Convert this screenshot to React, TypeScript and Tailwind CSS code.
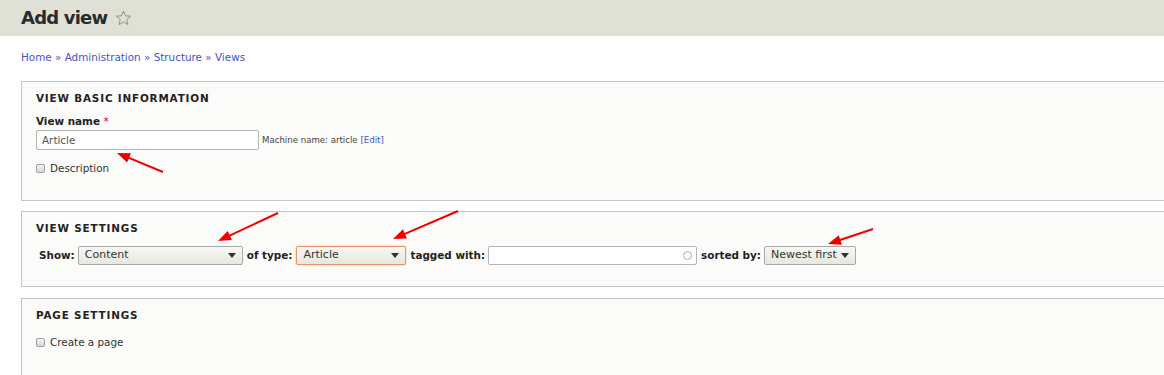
import React from 'react';

const Checkbox: React.FC = () => (
  <span className="inline-block w-[9px] h-[9px] rounded-[2px] border border-[#a0a0a0] bg-gradient-to-b from-[#f4f4f4] to-[#d8d8d8] shrink-0" />
);

const Caret: React.FC = () => (
  <svg width="8" height="5" viewBox="0 0 8 5" className="shrink-0">
    <path d="M0 0 H8 L4 5 Z" fill="#333" />
  </svg>
);

const Select: React.FC<{ value: string; width: string; active?: boolean }> = ({ value, width, active }) => (
  <div
    className={`${width} h-[19px] flex items-center justify-between pl-[6px] pr-[6px] rounded-[2px] text-[11px] font-normal whitespace-nowrap text-[#333] bg-gradient-to-b from-[#f7f8f3] to-[#e6e8df] border ${
      active ? 'border-[#e8946a] shadow-[0_0_2px_#f0b896]' : 'border-[#a8a8a8]'
    }`}
  >
    <span>{value}</span>
    <Caret />
  </div>
);

const Legend: React.FC<{ children: React.ReactNode }> = ({ children }) => (
  <div className="text-[10.4px] leading-[12px] font-bold uppercase tracking-[0.08em] text-[#222]">{children}</div>
);

const Arrow: React.FC<{ x1: number; y1: number; x2: number; y2: number }> = ({ x1, y1, x2, y2 }) => {
  const dx = x2 - x1;
  const dy = y2 - y1;
  const len = Math.hypot(dx, dy);
  const ux = dx / len;
  const uy = dy / len;
  const hl = 13;
  const hw = 5;
  const bx = x2 - ux * hl;
  const by = y2 - uy * hl;
  const head = `${x2},${y2} ${bx - uy * hw},${by + ux * hw} ${bx + uy * hw},${by - ux * hw}`;
  return (
    <g>
      <line x1={x1} y1={y1} x2={bx + ux * 2} y2={by + uy * 2} stroke="#f20000" strokeWidth={2} />
      <polygon points={head} fill="#f20000" />
    </g>
  );
};

const App: React.FC = () => {
  return (
    <div className="relative w-[1164px] h-[375px] overflow-hidden bg-white text-[#333] font-['DejaVu_Sans',sans-serif]">
      {/* Title bar */}
      <header className="h-[36px] bg-[#dfe0d6] flex items-center pl-[21px]">
        <h1 className="text-[18px] font-bold tracking-[-0.8px] text-[#2a2a2a] leading-none">Add view</h1>
        <svg width="17" height="16" viewBox="0 0 24 23" className="ml-[8px]">
          <path
            d="M12 1.5 L14.9 8.3 L22.3 8.9 L16.7 13.8 L18.4 21 L12 17.2 L5.6 21 L7.3 13.8 L1.7 8.9 L9.1 8.3 Z"
            fill="none"
            stroke="#8f917f"
            strokeWidth="1.4"
            strokeLinejoin="round"
          />
        </svg>
      </header>

      {/* Breadcrumb */}
      <nav className="mt-[14px] pl-[21px] text-[10.4px] leading-[14px] text-[#4652c6]">
        <a>Home</a> » <a>Administration</a> » <a>Structure</a> » <a>Views</a>
      </nav>

      <div className="pl-[21px] w-[1200px]">
        {/* View basic information */}
        <section className="mt-[17px] h-[120px] border border-[#c4c4c4] bg-[#fbfbf9] pt-[10px] px-[14px]">
          <Legend>View basic information</Legend>
          <div className="mt-[10px] text-[10.4px] leading-[14px] font-bold text-[#222]">
            View name <span className="text-[#e00] font-normal">*</span>
          </div>
          <div className="mt-[2px] flex items-center">
            <div className="w-[223px] h-[20px] border border-[#b5b5b5] rounded-[2px] bg-white flex items-center pl-[5px] pt-[1px] text-[10.4px] text-[#555]">
              Article
            </div>
            <span className="ml-[3px] pt-[1px] text-[8.6px] text-[#444]">
              Machine name: article <span className="text-[#4652c6]">[Edit]</span>
            </span>
          </div>
          <label className="mt-[11px] flex items-center gap-[5px] text-[10.4px] leading-[14px] text-[#333]">
            <Checkbox />
            Description
          </label>
        </section>

        {/* View settings */}
        <section className="mt-[10px] h-[76px] border border-[#c4c4c4] bg-[#fbfbf9] pt-[10px] px-[14px]">
          <Legend>View settings</Legend>
          <div className="mt-[12px] ml-[3px] flex items-center text-[10.4px] font-bold text-[#222] whitespace-nowrap">
            <span>Show:</span>
            <div className="ml-[3px]">
              <Select value="Content" width="w-[165px]" />
            </div>
            <span className="ml-[4px]">of type:</span>
            <div className="ml-[4px]">
              <Select value="Article" width="w-[110px]" active />
            </div>
            <span className="ml-[4px]">tagged with:</span>
            <div className="ml-[3px] w-[209px] h-[19px] border border-[#b5b5b5] rounded-[2px] bg-white flex items-center justify-end pr-[4px]">
              <span className="w-[9px] h-[9px] rounded-full border-[1.5px] border-[#a9a9a9]" />
            </div>
            <span className="ml-[4px]">sorted by:</span>
            <div className="ml-[3px]">
              <Select value="Newest first" width="w-[92px]" />
            </div>
          </div>
        </section>

        {/* Page settings */}
        <section className="mt-[11px] h-[100px] border border-[#c4c4c4] bg-[#fbfbf9] pt-[10px] px-[14px]">
          <Legend>Page settings</Legend>
          <label className="mt-[14px] flex items-center gap-[5px] text-[10.4px] leading-[14px] text-[#333]">
            <Checkbox />
            Create a page
          </label>
        </section>
      </div>

      {/* Annotation arrows */}
      <svg className="absolute inset-0 pointer-events-none" width="1164" height="375">
        <Arrow x1={163} y1={172} x2={117} y2={153} />
        <Arrow x1={278} y1={213} x2={218} y2={241} />
        <Arrow x1={458} y1={211} x2={393} y2={239} />
        <Arrow x1={873} y1={229} x2={828} y2={244} />
      </svg>
    </div>
  );
};

export default App;
